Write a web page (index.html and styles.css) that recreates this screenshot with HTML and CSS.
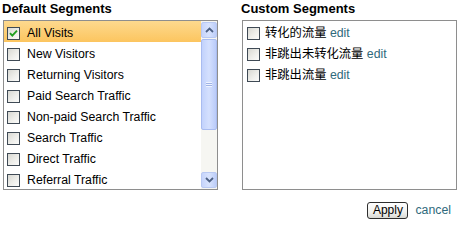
FILE: index.html
```html
<!DOCTYPE html>
<html>
<head>
<meta charset="utf-8">
<link rel="stylesheet" href="styles.css">
</head>
<body>
<div class="page">
  <div class="columns">
    <section class="col">
      <h2 class="title">Default Segments</h2>
      <div class="box">
        <ul class="list">
          <li class="row selected"><span class="cb checked"><svg viewBox="0 0 13 13" width="13" height="13"><path d="M3 6.2 L5.3 8.6 L10 3.6" fill="none" stroke="#22a021" stroke-width="1.9"/></svg></span><span class="label">All Visits</span></li>
          <li class="row"><span class="cb"></span><span class="label">New Visitors</span></li>
          <li class="row"><span class="cb"></span><span class="label">Returning Visitors</span></li>
          <li class="row"><span class="cb"></span><span class="label">Paid Search Traffic</span></li>
          <li class="row"><span class="cb"></span><span class="label">Non-paid Search Traffic</span></li>
          <li class="row"><span class="cb"></span><span class="label">Search Traffic</span></li>
          <li class="row"><span class="cb"></span><span class="label">Direct Traffic</span></li>
          <li class="row"><span class="cb"></span><span class="label">Referral Traffic</span></li>
        </ul>
        <div class="scrollbar">
          <div class="sb-btn"><svg viewBox="0 0 9 6" width="9" height="6"><path d="M1 5 L4.5 1.5 L8 5" fill="none" stroke="#4d6185" stroke-width="1.8"/></svg></div>
          <div class="sb-thumb"><span class="grip"></span></div>
          <div class="sb-track"></div>
          <div class="sb-btn"><svg viewBox="0 0 9 6" width="9" height="6"><path d="M1 1 L4.5 4.5 L8 1" fill="none" stroke="#4d6185" stroke-width="1.8"/></svg></div>
        </div>
      </div>
    </section>
    <section class="col">
      <h2 class="title">Custom Segments</h2>
      <div class="box custom">
        <ul class="list">
          <li class="row"><span class="cb"></span><span class="label cjk">转化的流量 <a class="link">edit</a></span></li>
          <li class="row"><span class="cb"></span><span class="label cjk">非跳出未转化流量 <a class="link">edit</a></span></li>
          <li class="row"><span class="cb"></span><span class="label cjk">非跳出流量 <a class="link">edit</a></span></li>
        </ul>
      </div>
    </section>
  </div>
  <div class="actions">
    <button class="apply">Apply</button>
    <a class="link cancel">cancel</a>
  </div>
</div>
</body>
</html>
```

FILE: styles.css
```css
html, body {
  margin: 0;
  padding: 0;
  background: #fff;
}
body {
  font-family: "Liberation Sans", Arial, "Noto Sans CJK SC", sans-serif;
  font-size: 12px;
  color: #000;
}
.page {
  padding: 1px 3px 0 2px;
}
.columns {
  display: grid;
  grid-template-columns: 215px 215px;
  column-gap: 24px;
  padding-left: 1px;
}
.title {
  margin: 0 0 3px -1px;
  font-size: 13px;
  font-weight: bold;
  line-height: 16px;
  color: #000;
}
.box {
  height: 168px;
  border: 1px solid #8e8e8e;
  display: flex;
  background: #fff;
}
.list {
  list-style: none;
  margin: 0;
  padding: 0;
  flex: 1;
  min-width: 0;
}
.row {
  height: 21px;
  box-sizing: border-box;
  padding: 5px 0 0 3px;
  display: flex;
  align-items: flex-start;
  line-height: 14px;
  white-space: nowrap;
}
.label {
  font-size: 12.3px;
}
.row.selected {
  background: linear-gradient(#fdd98e, #fcc55f);
}
.custom .row {
  padding-left: 4px;
}
.cb {
  width: 11px;
  height: 11px;
  margin-top: 1px;
  margin-right: 7px;
  flex: none;
  border: 1px solid #3f4a55;
  background: linear-gradient(135deg, #d8d8d2 0%, #eeeeea 55%, #fbfbfa 100%);
  position: relative;
}
.cb svg {
  position: absolute;
  left: -1px;
  top: -1px;
}
.custom .cb {
  margin-right: 5px;
}
.cjk {
  font-family: "Liberation Sans", Arial, "Noto Sans CJK SC", sans-serif;
}
.link {
  color: #2f6a7c;
  text-decoration: none;
  cursor: pointer;
}
.scrollbar {
  width: 16px;
  flex: none;
  display: flex;
  flex-direction: column;
  background: #f6f6f2;
}
.sb-btn {
  height: 14px;
  margin: 1px 0;
  border: 1px solid #b9c9f3;
  border-radius: 2px;
  background: linear-gradient(90deg, #c6d4fb, #d8e3fd 50%, #bccdf9);
  display: flex;
  align-items: center;
  justify-content: center;
}
.sb-thumb {
  height: 89px;
  border: 1px solid #a9bcf0;
  border-radius: 2px;
  background: linear-gradient(90deg, #c2d2fc, #d4e0fe 50%, #bacbf9);
  display: flex;
  align-items: center;
  justify-content: center;
}
.grip {
  width: 6px;
  height: 5px;
  background: repeating-linear-gradient(#eef3ff 0 1px, #9fb3e6 1px 2px);
}
.sb-track {
  flex: 1;
}
.actions {
  display: flex;
  justify-content: flex-end;
  align-items: center;
  gap: 7px;
  margin-top: 12px;
  padding-right: 6px;
}
.apply {
  font-family: "Liberation Sans", Arial, sans-serif;
  font-size: 12px;
  color: #000;
  height: 17px;
  width: 41px;
  padding: 0;
  border: 1px solid #2e2e2e;
  border-radius: 3px;
  background: linear-gradient(#ffffff, #f1f1ee 60%, #d9d9d4);
  line-height: 15px;
}
.cancel {
  font-size: 12.3px;
  line-height: 15px;
}
```
